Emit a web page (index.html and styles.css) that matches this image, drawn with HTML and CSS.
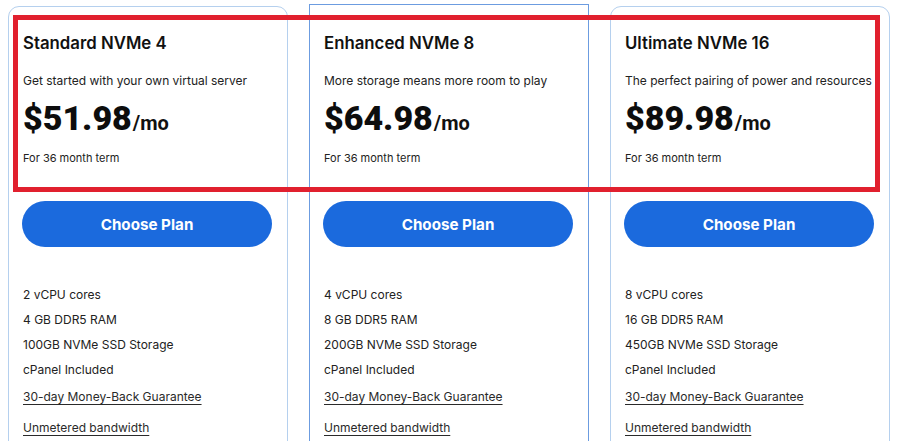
FILE: index.html
```html
<!DOCTYPE html>
<html>
<head>
<meta charset="utf-8">
<link rel="stylesheet" href="styles.css">
</head>
<body>
<div class="page">
  <div class="plans">
    <div class="card">
      <h2 class="title">Standard NVMe 4</h2>
      <p class="desc">Get started with your own virtual server</p>
      <div class="price"><span class="amount">$51.98</span><span class="per">/mo</span></div>
      <p class="term">For 36 month term</p>
      <a class="btn">Choose Plan</a>
      <ul class="features">
        <li>2 vCPU cores</li>
        <li>4 GB DDR5 RAM</li>
        <li>100GB NVMe SSD Storage</li>
        <li>cPanel Included</li>
        <li class="link">30-day Money-Back Guarantee</li>
        <li class="link">Unmetered bandwidth</li>
      </ul>
    </div>
    <div class="card featured">
      <h2 class="title">Enhanced NVMe 8</h2>
      <p class="desc">More storage means more room to play</p>
      <div class="price"><span class="amount">$64.98</span><span class="per">/mo</span></div>
      <p class="term">For 36 month term</p>
      <a class="btn">Choose Plan</a>
      <ul class="features">
        <li>4 vCPU cores</li>
        <li>8 GB DDR5 RAM</li>
        <li>200GB NVMe SSD Storage</li>
        <li>cPanel Included</li>
        <li class="link">30-day Money-Back Guarantee</li>
        <li class="link">Unmetered bandwidth</li>
      </ul>
    </div>
    <div class="card">
      <h2 class="title">Ultimate NVMe 16</h2>
      <p class="desc">The perfect pairing of power and resources</p>
      <div class="price"><span class="amount">$89.98</span><span class="per">/mo</span></div>
      <p class="term">For 36 month term</p>
      <a class="btn">Choose Plan</a>
      <ul class="features">
        <li>8 vCPU cores</li>
        <li>16 GB DDR5 RAM</li>
        <li>450GB NVMe SSD Storage</li>
        <li>cPanel Included</li>
        <li class="link">30-day Money-Back Guarantee</li>
        <li class="link">Unmetered bandwidth</li>
      </ul>
    </div>
  </div>
  <div class="highlight"></div>
</div>
</body>
</html>
```

FILE: styles.css
```css
* { box-sizing: border-box; }
html, body {
  margin: 0;
  padding: 0;
  background: #fff;
  overflow: hidden;
}
body {
  width: 900px;
  height: 441px;
  font-family: Inter, "Open Sans", Arial, sans-serif;
  color: #1a1a1a;
}
.page {
  position: relative;
  height: 441px;
  overflow: hidden;
}
.plans {
  display: flex;
  gap: 21px;
  padding: 6px 0 0 8px;
  align-items: flex-start;
}
.card {
  width: 280px;
  height: 480px;
  border: 1px solid #b5d0ee;
  border-radius: 11px;
  padding: 24px 14px 0 14px;
  background: #fff;
  white-space: nowrap;
}
.card.featured {
  margin-top: -2px;
  padding-top: 26px;
  border-color: #6c9ce0;
  border-radius: 0;
}
.title {
  margin: 0;
  font-size: 16.8px;
  line-height: 24px;
  font-weight: 600;
  color: #111;
}
.desc {
  margin: 16px 0 0 0;
  font-size: 12px;
  line-height: 20px;
  color: #222;
}
.price {
  margin: 5px 0 0 0;
  display: flex;
  align-items: baseline;
  line-height: 44px;
  height: 44px;
  font-family: Roboto, Inter, Arial, sans-serif;
}
.amount {
  font-size: 34px;
  font-weight: 900;
  color: #0d0d0d;
}
.per {
  font-size: 20px;
  font-weight: 700;
  color: #111;
  margin-left: 1px;
}
.term {
  margin: 9px 0 0 0;
  font-size: 11px;
  line-height: 18px;
  color: #222;
}
.btn {
  display: flex;
  align-items: center;
  justify-content: center;
  margin: 34px 0 0 -1px;
  height: 46px;
  width: 250px;
  border-radius: 23px;
  background: #1b6add;
  color: #fff;
  font-size: 15.2px;
  font-weight: 700;
}
.features {
  list-style: none;
  margin: 35px 0 0 0;
  padding: 0;
  font-size: 12px;
  color: #222;
}
.features li {
  line-height: 25px;
  height: 25px;
}
.features li.link {
  text-decoration: underline;
  text-underline-offset: 3px;
  color: #2a2a2a;
  height: 28px;
  line-height: 28px;
}
.features li.link:first-of-type,
.features li:nth-child(5) {
  margin-top: 1px;
}
.features li.link + li.link {
  margin-top: 3px;
}
.highlight {
  position: absolute;
  left: 13px;
  top: 15px;
  width: 867px;
  height: 177px;
  border: 5px solid #e1202e;
  pointer-events: none;
}
```
